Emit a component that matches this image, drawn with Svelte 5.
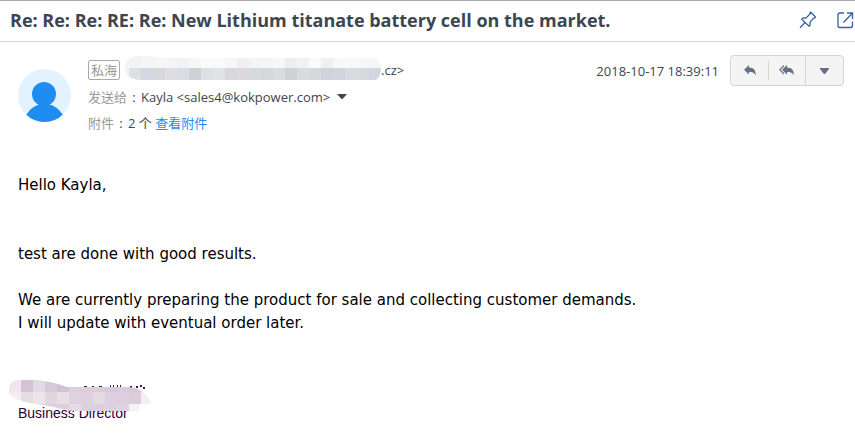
<script>
	const subject = 'Re: Re: Re: RE: Re: New Lithium titanate battery cell on the market.';
	const BLOCK = 12;

	// blurred-out sender address, two rows of blocks
	const senderTop = ['#f1f3f4', '#f3f5f6', '#f6f6f7', '#f4f5f7', '#f1f2f5', '#f7f7f8', '#fafafa', '#fafafa', '#f6f6f7', '#efeff2', '#f5f5f6',
		'#f5f5f6', '#f7f7f8', '#ededee', '#f0f1f3', '#fafafa', '#f0f0f2', '#f8f8f9', '#f9f9fa', '#f7f7f8', '#f6f6f7'];
	const senderBottom = ['#dfe0e0', '#d5d8e2', '#d5d8dd', '#dedde1', '#dadde3', '#d0d0d7', '#dfe0e4', '#e0e3e6', '#d6d8db', '#dbd9dd', '#d6dadd',
		'#d5d7dd', '#dadde0', '#d0d1d3', '#d8dbdf', '#d6d8dc', '#cfd3dd', '#d2d5dd', '#d9dcdf', '#d9dadd', '#d3d6e0'];

	// same for the name in the signature
	const signRows = [
		['#f0e6ec', '#d3c3d5', '#e1dbe3', '#d6c9dc', '#d2c0d3', '#dfcfdc', '#dacddc', '#dccbd9', '#d5c8dc', '#d8cbdb', '#d8c7d7', '#e9e0ea'],
		['#f3edf3', '#e6dce4', '#ebe5e9', '#e1d5e0', '#e9e0e7', '#dfd2df', '#dfd0df', '#e4dae2', '#ddcfe0', '#ddcfdd', '#dccdd9', '#f1f0f6'],
		['#eee7ee', '#e5d9e3', '#e2d5e2', '#decfde', '#ddd0de', '#e5dde5', '#dcd0df', '#decfdd', '#ddd0e0', '#dfd3e1', '#f5f2f7', '#f5f2f7']
	];

	const tools = [
		{ name: 'Reply', icon: 'reply' },
		{ name: 'Reply all', icon: 'all' },
		{ name: 'More', icon: 'more' }
	];
</script>

<div class="mail">
	<header class="subject">
		<h1>{subject}</h1>
		<button class="icon" aria-label="Pin">
			<svg width="18" height="18" viewBox="0 0 18 18" fill="none" stroke="#3562a3" stroke-width="1.3" stroke-linejoin="round">
				<path d="M11.5 1 16.5 6l-1 1.2-1.3.2-3.2 4 .1 2.600-1 1.200-7.400-7 1.400-1.200 2.800.1L10.500 3.500z" />
				<path d="M6 11.500 1 16.800" />
			</svg>
		</button>
		<button class="icon" aria-label="Open in new window">
			<svg width="17" height="17" viewBox="0 0 17 17" fill="none" stroke="#3562a3" stroke-width="1.3">
				<path d="M7 1H3Q1 1 1 3V13.500Q1 15.500 3 15.500H13.500Q15.500 15.500 15.500 13.500V9.500" />
				<path d="M10 1h5.500V7M15.300 1.300 6.500 10.500" />
			</svg>
		</button>
	</header>

	<section class="meta">
		<svg class="avatar" width="53" height="53" viewBox="0 0 53 53" aria-hidden="true">
			<clipPath id="face"><circle cx="26.5" cy="26.5" r="26.5" /></clipPath>
			<g clip-path="url(#face)">
				<rect width="53" height="53" fill="#e3f2ff" />
				<circle cx="26" cy="25" r="12" fill="#1e8cf0" />
				<path d="M7 48Q14 35 26.500 35T46 48V53H7z" fill="#1e8cf0" />
			</g>
		</svg>
		<div class="people">
			<div class="line from">
				<span class="tag">私海</span>
				<svg class="redact" width="256" height="24" viewBox="0 0 256 24" aria-hidden="true">
					<clipPath id="sender"><path d="M12 0H26L34 2H246Q256 3 256 13 256 20 251 24H14Q0 22 0 12 0 2 12 0z" /></clipPath>
					<g clip-path="url(#sender)">
						<rect width="256" height="24" fill="#f3f4f5" />
						{#each senderTop as fill, i}
							<rect x={4 + i * BLOCK} y="0" width={BLOCK} height="12" {fill} />
						{/each}
						{#each senderBottom as fill, i}
							<rect x={4 + i * BLOCK} y="12" width={BLOCK} height="12" {fill} />
						{/each}
					</g>
				</svg>
				<span>.cz&gt;</span>
			</div>
			<div class="line">
				<span class="label">发送给</span><span class="colon">:</span>
				<span>Kayla &lt;sales4@kokpower.com&gt;</span>
				<button class="expand" aria-label="Show details">
					<svg width="10" height="6" viewBox="0 0 10 6"><path d="M0 0H10L5.500 5H4.500z" fill="#3c4650" /></svg>
				</button>
			</div>
			<div class="line">
				<span class="label">附件</span><span class="colon">:</span>
				<span>2 个 <a href="#attachments">查看附件</a></span>
			</div>
		</div>
		<time datetime="2018-10-17T18:39:11">2018-10-17 18:39:11</time>
		<div class="tools">
			{#each tools as tool}
				<button class={tool.icon} aria-label={tool.name}>
					{#if tool.icon === 'reply'}
						<svg width="12" height="11" viewBox="0 0 12 11" fill="#667085">
							<path d="M5 0V2.500C9.500 2.600 12 5 11.800 10.500 10.500 7.600 8.500 7 5 7V9.500L0 4.700z" />
						</svg>
					{:else if tool.icon === 'all'}
						<svg width="15" height="11" viewBox="0 0 15 11" fill="#667085">
							<path d="M8 0V2.500C12.500 2.600 15 5 14.800 10.500 13.500 7.600 11.500 7 8 7V9.500L3 4.700z" />
							<path d="M5 .5.8 4.700 5 9" fill="none" stroke="#667085" stroke-width="1.2" />
						</svg>
					{:else}
						<svg width="9" height="6" viewBox="0 0 9 6" fill="#667085"><path d="M0 0H9V1L5 6H4L0 1z" /></svg>
					{/if}
				</button>
			{/each}
		</div>
	</section>

	<article class="body">
		<p>Hello Kayla,</p>
		<p>test are done with good results.</p>
		<p>We are currently preparing the product for sale and collecting customer demands.<br />I will update with eventual order later.</p>
	</article>

	<footer class="sign">
		<span>Business Director</span>
		<svg class="smudge" width="142" height="31" viewBox="0 0 142 31" aria-hidden="true">
			<path d="M75 7h3M83 7h2M90 7h3M101 6h1M104 6h1M108 6h1M111 6h1M121 7h2M127 7h2M131 6h2M134 8h2" stroke="#352040" stroke-width="2" />
			<clipPath id="name">
				<path d="M8 0H28Q45 2 58 7H120Q138 9 142 24H130V31H63Q48 28 35 25 10 23 0 14V8Q1 1 8 0z" />
			</clipPath>
			<g clip-path="url(#name)">
				{#each signRows as row, r}
					{#each row as fill, i}
						<rect x={i * BLOCK} y={r * BLOCK} width={BLOCK} height={BLOCK} {fill} />
					{/each}
				{/each}
			</g>
		</svg>
	</footer>
</div>

<style>
	:global(body) { margin: 0; background: #fff; overflow-x: hidden; }
	.mail { font: 13px/26px "Open Sans", "Noto Sans CJK SC", sans-serif; color: #3c4650; }
	button { padding: 0; border: 0; background: none; cursor: pointer; display: flex; align-items: center; justify-content: center; }
	.subject {
		display: flex; align-items: center; gap: 20px; height: 38px; padding: 0 1px 2px 10px;
		border-top: 1px solid #aaa; border-bottom: 1px solid #d5d5d5;
	}
	h1 { flex: 1; margin: 0; font-size: 18px; line-height: 24px; font-weight: 700; white-space: nowrap; }
	.icon { flex: none; }
	.meta { display: flex; align-items: flex-start; padding: 13px 11px 0 18px; }
	.avatar { flex: none; margin: 14px 17px 0 0; }
	.people { flex: 1; padding-top: 1px; }
	.line { display: flex; align-items: center; height: 26px; white-space: nowrap; }
	.from { height: 28px; }
	.tag {
		padding: 0 2px; margin-right: 5px; border: 1px solid #aaa; border-radius: 2px;
		color: #999; line-height: 18px;
	}
	.redact { align-self: flex-start; }
	.label { color: #999; }
	.colon { width: 14px; text-align: center; }
	.expand { margin-left: 7px; }
	a { color: #1e8cf0; text-decoration: none; }
	time { margin: 3px 11px 0 0; white-space: nowrap; }
	.tools { display: flex; flex: none; height: 29px; border: 1px solid #d5d5d5; border-radius: 4px; background: #f4f4f4; }
	.tools button { width: 37px; }
	.tools .all { width: 38px; position: relative; border-right: 1px solid #d5d5d5; }
	.tools .all::before { content: ''; position: absolute; left: 0; top: 5px; bottom: 5px; width: 1px; background: #d5d5d5; }
	.body { padding: 38px 18px 0; font: 15px/23px "DejaVu Sans", Verdana, sans-serif; color: #000; }
	p { margin: 0 0 23px; }
	p:first-child { margin-bottom: 46px; }
	.sign { position: relative; padding: 45px 18px 14px; font: 14px/20px "Liberation Sans", Arial, sans-serif; color: #300038; }
	.smudge { position: absolute; left: 9px; top: 22px; }
</style>
